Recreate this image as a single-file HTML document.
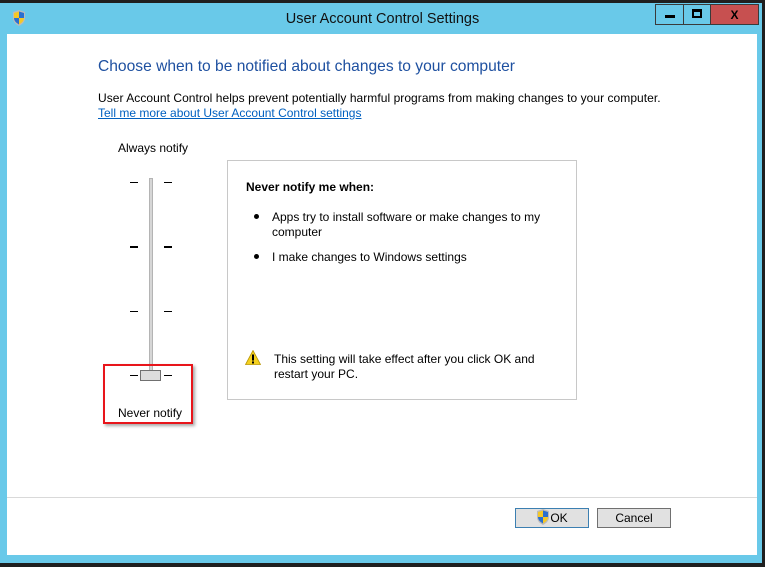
<!DOCTYPE html>
<html><head><style>
*{margin:0;padding:0;box-sizing:border-box}
body{width:765px;height:567px;background:#1f1f1f;position:relative;overflow:hidden;font-family:"Liberation Sans",sans-serif;font-size:12px;color:#000}
.a{position:absolute}
.frame{left:0;top:3px;width:762px;height:560px;background:#69c9e9;}
.client{left:7px;top:34px;width:750px;height:521px;background:#fff}
.t{white-space:nowrap}
.tick{position:absolute;height:1px;width:8px;background:#000}
.btn{position:absolute;height:20px;background:#e1e1e1;border:1px solid #adadad;text-align:center;line-height:18px;font-size:12px}
</style></head><body>
<div class="a frame"></div>
<div class="a client"></div>
<svg class="a" style="left:12px;top:10px" width="14" height="16" viewBox="0 0 14 16"><path d="M7 0L13 2V8C13 12 10 14.5 7 16C4 14.5 1 12 1 8V2Z" fill="#bbb"/><path d="M7 1.5L12 3V8H7Z" fill="#2a6fd0"/><path d="M2 8H7V14.5C4.5 13 2 11 2 8Z" fill="#2a6fd0"/><path d="M2 3L7 1.5V8H2Z" fill="#f5c826"/><path d="M7 8H12C12 11 9.5 13 7 14.5Z" fill="#f5c826"/></svg>
<div class="a t" style="left:0;width:765px;top:11px;text-align:center;font-size:14.5px;color:#111">User Account Control Settings</div>
<div class="a" style="left:655px;top:4px;width:29px;height:21px;border:1px solid #3a3a3a;border-right:none"></div>
<div class="a" style="left:665px;top:15px;width:10px;height:3px;background:#000"></div>
<div class="a" style="left:683px;top:4px;width:28px;height:21px;border:1px solid #3a3a3a"></div>
<div class="a" style="left:692px;top:9px;width:10px;height:9px;border:2px solid #000;border-top-width:3px"></div>
<div class="a" style="left:711px;top:4px;width:48px;height:21px;background:#c75050;border:1px solid #3a3a3a;border-left:none;color:#000;font-weight:bold;text-align:center;font-size:12px;line-height:20px">X</div>
<div class="a t" style="left:98px;top:58px;font-size:15.6px;color:#1e50a0">Choose when to be notified about changes to your computer</div>
<div class="a t" style="left:98px;top:91px;letter-spacing:0.05px">User Account Control helps prevent potentially harmful programs from making changes to your computer.</div>
<div class="a t" style="left:98px;top:106px;color:#0060c0;text-decoration:underline">Tell me more about User Account Control settings</div>
<div class="a t" style="left:118px;top:141px">Always notify</div>
<div class="a" style="left:149px;top:178px;width:4px;height:195px;background:#d6d6d6;border:1px solid #b4b4b4"></div>
<div class="tick" style="left:130px;top:182px"></div><div class="tick" style="left:164px;top:182px"></div>
<div class="tick" style="left:130px;top:246px;height:2px"></div><div class="tick" style="left:164px;top:246px;height:2px"></div>
<div class="tick" style="left:130px;top:311px"></div><div class="tick" style="left:164px;top:311px"></div>
<div class="tick" style="left:130px;top:375px"></div><div class="tick" style="left:164px;top:375px"></div>
<div class="a" style="left:140px;top:370px;width:21px;height:11px;background:#dcdcdc;border:1px solid #707070"></div>
<div class="a" style="left:103px;top:364px;width:90px;height:60px;border:2px solid #e8151b;box-shadow:2px 2px 3px rgba(0,0,0,.35)"></div>
<div class="a t" style="left:118px;top:406px">Never notify</div>
<div class="a" style="left:227px;top:160px;width:350px;height:240px;border:1px solid #c8c8c8"></div>
<div class="a t" style="left:246px;top:180px;font-weight:bold">Never notify me when:</div>
<div class="a" style="left:254px;top:214px;width:5px;height:5px;border-radius:50%;background:#000"></div>
<div class="a" style="left:272px;top:210px;line-height:15px">Apps try to install software or make changes to my<br>computer</div>
<div class="a" style="left:254px;top:254px;width:5px;height:5px;border-radius:50%;background:#000"></div>
<div class="a t" style="left:272px;top:250px">I make changes to Windows settings</div>
<svg class="a" style="left:245px;top:350px" width="16" height="15" viewBox="0 0 16 15"><path d="M8 0.5L15.5 14.5H0.5Z" fill="#f5d11f" stroke="#b89500" stroke-width=".8"/><rect x="7" y="4.5" width="2" height="6" fill="#000"/><rect x="7" y="11.5" width="2" height="2" fill="#000"/></svg>
<div class="a" style="left:274px;top:352px;line-height:15px">This setting will take effect after you click OK and<br>restart your PC.</div>
<div class="a" style="left:7px;top:497px;width:750px;height:1px;background:#d9d9d9"></div>
<div class="btn" style="left:515px;top:508px;width:74px;border-color:#3c7fb1"><svg style="vertical-align:-3px" width="14" height="16" viewBox="0 0 14 16"><path d="M7 0L13 2V8C13 12 10 14.5 7 16C4 14.5 1 12 1 8V2Z" fill="#bbb"/><path d="M7 1.5L12 3V8H7Z" fill="#2a6fd0"/><path d="M2 8H7V14.5C4.5 13 2 11 2 8Z" fill="#2a6fd0"/><path d="M2 3L7 1.5V8H2Z" fill="#f5c826"/><path d="M7 8H12C12 11 9.5 13 7 14.5Z" fill="#f5c826"/></svg>OK</div>
<div class="btn" style="left:597px;top:508px;width:74px;border-color:#707070">Cancel</div>
</body></html>
